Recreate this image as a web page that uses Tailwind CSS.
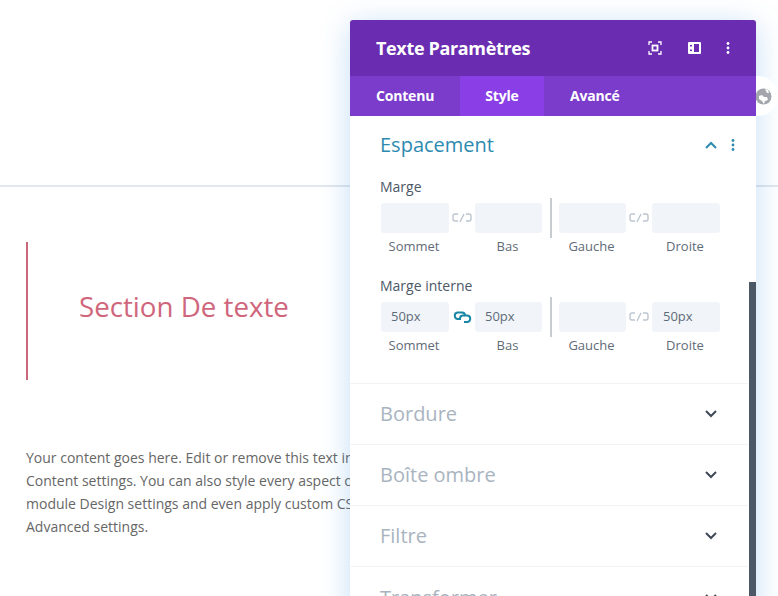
<!DOCTYPE html>
<html lang="fr">
<head>
  <meta charset="UTF-8" />
  <title>Texte Paramètres</title>
  <script src="https://cdn.jsdelivr.net/npm/@tailwindcss/browser@4"></script>
</head>
<body class="bg-white font-['Open_Sans',sans-serif]">
  <div class="relative w-[778px] h-[596px] overflow-hidden">
    <!-- page behind the panel -->
    <div class="h-[185px] border-b-[2px] border-[#e2e6ee] box-content"></div>
    <div class="pl-[26px] pt-[55px]">
      <div class="h-[138px] border-l-[2px] border-[#c9677c] pl-[51px] flex items-center">
        <h1 class="text-[27.7px] leading-[36px] text-[#d0667c] mt-[-10px]">Section De texte</h1>
      </div>
      <p class="whitespace-nowrap mt-[66px] text-[14px] leading-[23px] text-[#666666]">Your content goes here. Edit or remove this text inline or in the module<br />Content settings. You can also style every aspect of this content in the<br />module Design settings and even apply custom CSS to this text in the module<br />Advanced settings.</p>
    </div>

    <!-- settings panel -->
    <div class="absolute left-[350px] top-[20px] w-[406px] h-[600px] bg-white rounded-t-[3px] shadow-[0_5px_30px_rgba(43,135,218,0.28)] overflow-hidden">
      <div class="h-[56px] bg-[#6a2cb0] flex items-center pl-[26px] text-white">
        <h2 class="text-[18px] font-bold tracking-[-0.35px] flex-1">Texte Paramètres</h2>
        <svg width="14" height="14" viewBox="0 0 14 14" fill="none" stroke="#fff" stroke-width="1.300" class="mr-[26px]">
          <path d="M1 4V1h3M10 1h3v3M13 10v3h-3M4 13H1v-3"/>
          <rect x="4.500" y="4.500" width="5" height="5" stroke-width="1.800"/>
        </svg>
        <svg width="13" height="12" viewBox="0 0 13 12" class="mr-[25px]">
          <path fill-rule="evenodd" d="M1 0h11a1 1 0 0 1 1 1v10a1 1 0 0 1-1 1H1a1 1 0 0 1-1-1V1a1 1 0 0 1 1-1zM6 2v8h5V2zM2 3v1.500h2V3zM2 7.500V9h2V7.500z" fill="#fff"/>
        </svg>
        <svg width="4" height="12" viewBox="0 0 4 12" fill="#fff" class="mr-[26px]">
          <circle cx="2" cy="1.500" r="1.400"/><circle cx="2" cy="6" r="1.400"/><circle cx="2" cy="10.500" r="1.400"/>
        </svg>
      </div>
      <div class="h-[40px] bg-[#7b3bcb] flex text-white text-[14px] font-bold tracking-[-0.2px]">
        <div class="w-[110px] pl-[26px] pb-[1px] flex items-center">Contenu</div>
        <div class="w-[84px] pb-[1px] bg-[#8a3fe6] flex items-center justify-center">Style</div>
        <div class="pl-[26px] pb-[1px] flex items-center">Avancé</div>
      </div>

      <div class="relative">
        <div class="absolute right-0 top-[166px] w-[7px] h-[400px] bg-[#4c5866]"></div>

        <div class="h-[268px] border-b border-[#f1f3f6] mr-[8px] pl-[30px]">
          <div class="h-[57px] flex items-center pr-[12px]">
            <h3 class="flex-1 text-[20px] text-[#2e8bb0]">Espacement</h3>
            <svg width="12" height="8" viewBox="0 0 12 8" fill="none" stroke="#2e8bb0" stroke-width="2" class="mr-[14px]"><path d="M1 7l5-5 5 5"/></svg>
            <svg width="4" height="12" viewBox="0 0 4 12" fill="#2e8bb0" class="mr-[1px]"><circle cx="2" cy="1.500" r="1.400"/><circle cx="2" cy="6" r="1.400"/><circle cx="2" cy="10.500" r="1.400"/></svg>
          </div>

          <!-- Marge -->
          <div class="text-[14px] leading-[20px] text-[#4c5866] font-medium mt-[4px]">Marge</div>
          <div class="flex mt-[6px] ml-[1px] h-[60px]">
            <div class="w-[68px]">
              <div class="h-[30px] bg-[#f1f5f9] rounded-[3px]"></div>
              <div class="mt-[4px] pr-[2px] text-center text-[13px] leading-[18px] font-medium text-[#5f6b78]">Sommet</div>
            </div>
            <div class="w-[26px] h-[30px] flex items-center justify-center">
              <svg width="20" height="10" viewBox="0 0 20 10" fill="none" stroke="#bcc5cf" stroke-width="1.400"><path d="M6 1H3Q1 1 1 3v3q0 2 2 2h3M14 1h3q2 0 2 2v3q0 2-2 2h-3M8 9l4-8"/></svg>
            </div>
            <div class="w-[67px]">
              <div class="h-[30px] bg-[#f1f5f9] rounded-[3px]"></div>
              <div class="mt-[4px] pr-[2px] text-center text-[13px] leading-[18px] font-medium text-[#5f6b78]">Bas</div>
            </div>
            <div class="w-[2px] h-[40px] mt-[-5px] mx-[8px] bg-[#c8ccd0]"></div>
            <div class="w-[67px] ml-[-1px]">
              <div class="h-[30px] bg-[#f1f5f9] rounded-[3px]"></div>
              <div class="mt-[4px] pr-[2px] text-center text-[13px] leading-[18px] font-medium text-[#5f6b78]">Gauche</div>
            </div>
            <div class="w-[26px] h-[30px] flex items-center justify-center">
              <svg width="20" height="10" viewBox="0 0 20 10" fill="none" stroke="#bcc5cf" stroke-width="1.400"><path d="M6 1H3Q1 1 1 3v3q0 2 2 2h3M14 1h3q2 0 2 2v3q0 2-2 2h-3M8 9l4-8"/></svg>
            </div>
            <div class="w-[68px]">
              <div class="h-[30px] bg-[#f1f5f9] rounded-[3px]"></div>
              <div class="mt-[4px] pr-[2px] text-center text-[13px] leading-[18px] font-medium text-[#5f6b78]">Droite</div>
            </div>
          </div>

          <!-- Marge interne -->
          <div class="text-[14px] leading-[20px] text-[#4c5866] font-medium mt-[13px]">Marge interne</div>
          <div class="flex mt-[6px] ml-[1px] h-[60px]">
            <div class="w-[68px]">
              <div class="h-[30px] bg-[#f1f5f9] rounded-[3px] pl-[10px] flex items-center text-[13px] font-medium text-[#5f6b78]">50px</div>
              <div class="mt-[4px] pr-[2px] text-center text-[13px] leading-[18px] font-medium text-[#5f6b78]">Sommet</div>
            </div>
            <div class="w-[26px] h-[30px] flex items-center justify-center">
              <svg width="19" height="12" viewBox="0 0 19 12" fill="none" stroke="#1a86a5" stroke-width="2"><path d="M8 8H4.500a3.300 3.300 0 0 1 0-6.500H9a3 3 0 0 1 3 3"/><path d="M7 7.500a3 3 0 0 1 3-3h4.500a3.300 3.300 0 0 1 0 6.500H11"/></svg>
            </div>
            <div class="w-[67px]">
              <div class="h-[30px] bg-[#f1f5f9] rounded-[3px] pl-[10px] flex items-center text-[13px] font-medium text-[#5f6b78]">50px</div>
              <div class="mt-[4px] pr-[2px] text-center text-[13px] leading-[18px] font-medium text-[#5f6b78]">Bas</div>
            </div>
            <div class="w-[2px] h-[40px] mt-[-5px] mx-[8px] bg-[#c8ccd0]"></div>
            <div class="w-[67px] ml-[-1px]">
              <div class="h-[30px] bg-[#f1f5f9] rounded-[3px]"></div>
              <div class="mt-[4px] pr-[2px] text-center text-[13px] leading-[18px] font-medium text-[#5f6b78]">Gauche</div>
            </div>
            <div class="w-[26px] h-[30px] flex items-center justify-center">
              <svg width="20" height="10" viewBox="0 0 20 10" fill="none" stroke="#bcc5cf" stroke-width="1.400"><path d="M6 1H3Q1 1 1 3v3q0 2 2 2h3M14 1h3q2 0 2 2v3q0 2-2 2h-3M8 9l4-8"/></svg>
            </div>
            <div class="w-[68px]">
              <div class="h-[30px] bg-[#f1f5f9] rounded-[3px] pl-[11px] flex items-center text-[13px] font-medium text-[#5f6b78]">50px</div>
              <div class="mt-[4px] pr-[2px] text-center text-[13px] leading-[18px] font-medium text-[#5f6b78]">Droite</div>
            </div>
          </div>
        </div>

        <div class="h-[61px] border-b border-[#f1f3f6] mr-[8px] pl-[30px] pr-[31px] flex items-center justify-between">
          <h3 class="text-[20px] text-[#a9b4bf]">Bordure</h3>
          <svg width="12" height="8" viewBox="0 0 12 8" fill="none" stroke="#3f4a56" stroke-width="2"><path d="M1 1l5 5 5-5"/></svg>
        </div>
        <div class="h-[61px] border-b border-[#f1f3f6] mr-[8px] pl-[30px] pr-[31px] flex items-center justify-between">
          <h3 class="text-[20px] text-[#a9b4bf]">Boîte ombre</h3>
          <svg width="12" height="8" viewBox="0 0 12 8" fill="none" stroke="#3f4a56" stroke-width="2"><path d="M1 1l5 5 5-5"/></svg>
        </div>
        <div class="h-[61px] border-b border-[#f1f3f6] mr-[8px] pl-[30px] pr-[31px] flex items-center justify-between">
          <h3 class="text-[20px] text-[#a9b4bf]">Filtre</h3>
          <svg width="12" height="8" viewBox="0 0 12 8" fill="none" stroke="#3f4a56" stroke-width="2"><path d="M1 1l5 5 5-5"/></svg>
        </div>
        <div class="h-[61px] mr-[8px] pl-[30px] pr-[31px] flex items-center justify-between">
          <h3 class="text-[20px] text-[#a9b4bf]">Transformer</h3>
          <svg width="12" height="8" viewBox="0 0 12 8" fill="none" stroke="#3f4a56" stroke-width="2"><path d="M1 1l5 5 5-5"/></svg>
        </div>
      </div>
    </div>

    <!-- globe button, half hidden by the panel -->
    <div class="absolute left-[756px] top-[76px] w-[22px] h-[40px] rounded-r-full bg-white overflow-hidden">
      <svg width="17" height="17" viewBox="0 0 17 17" class="ml-[-1px] mt-[12px]">
        <circle cx="8.500" cy="8.500" r="8" fill="#a3a7ad"/>
        <path d="M4 8l3-1 2 2 3 0 1 3-3 1-1 3-2-3-3-2zM10 1l3 1 1 3-2 0z" fill="#ffffff"/>
      </svg>
    </div>
  </div>
</body>
</html>
